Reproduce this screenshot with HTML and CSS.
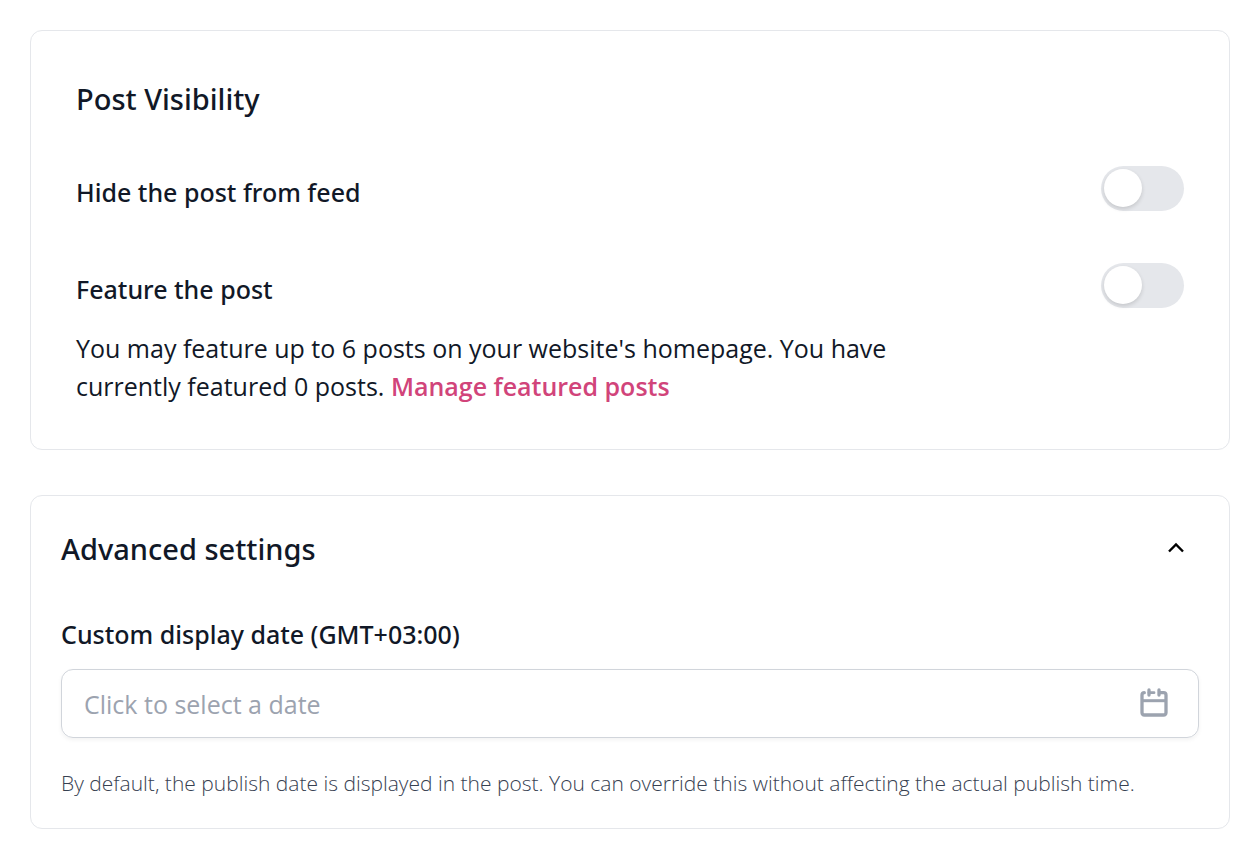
FILE: index.html
```html
<!DOCTYPE html>
<html lang="en">
<head>
    <meta charset="UTF-8">
    <meta name="viewport" content="width=device-width, initial-scale=1.0">
    <title>Post settings</title>
    <link rel="stylesheet" href="styles.css">
</head>
<body>
    <section class="card visibility">
        <h2>Post Visibility</h2>
        <div class="option">
            <label for="hide-post">Hide the post from feed</label>
            <input type="checkbox" class="toggle" id="hide-post">
        </div>
        <div class="option">
            <div class="option-text">
                <label for="feature-post">Feature the post</label>
                <p>You may feature up to 6 posts on your website's homepage. You have currently featured 0 posts. <a href="#">Manage featured posts</a></p>
            </div>
            <input type="checkbox" class="toggle" id="feature-post">
        </div>
    </section>

    <section class="card advanced">
        <h2>
            <button type="button" class="collapse-btn" aria-expanded="true">
                Advanced settings
                <svg width="16" height="14" viewBox="0 0 16 14" fill="none" stroke="#000" stroke-width="2.4">
                    <path d="M1 9.5 L8 2.5 L15 9.5"/>
                </svg>
            </button>
        </h2>
        <label for="display-date">Custom display date (GMT+03:00)</label>
        <div class="date-field">
            <input type="text" id="display-date" placeholder="Click to select a date">
            <svg width="28" height="32" viewBox="0 0 28 32" fill="none" stroke="#9ca3af" stroke-width="3.3" stroke-linecap="round">
                <path d="M4.3 4.7 Q2 4.7 2 7 V24.5 Q2 27 4.5 27 H23.5 Q26 27 26 24.5 V7 Q26 4.7 23.7 4.7 H20"/>
                <path d="M9 4.7 H14" stroke-width="2.8"/>
                <path d="M2 12.7 H26" stroke-linecap="butt" stroke-width="3"/>
                <path d="M9 2 V7 M19 2 V7"/>
            </svg>
        </div>
        <p class="hint">By default, the publish date is displayed in the post. You can override this without affecting the actual publish time.</p>
    </section>
</body>
</html>
```
FILE: styles.css
```css
* {
    box-sizing: border-box;
}

body {
    margin: 0;
    padding: 30px;
    font-family: "Open Sans", "Noto Sans", sans-serif;
    font-size: 25px;
    line-height: 38px;
    color: #111827;
    background-color: #fff;
}

h2, p {
    margin: 0;
}

h2 {
    font-family: "Noto Sans", sans-serif;
    font-size: 29px;
    font-weight: 500;
    line-height: 45px;
}

label {
    display: block;
    font-family: "Noto Sans", sans-serif;
    font-weight: 500;
}

.card {
    border: 1px solid #e5e7eb;
    border-radius: 12px;
}

.visibility {
    padding: 45px 45px 44px;
    margin-bottom: 45px;
}

.option {
    display: flex;
    justify-content: space-between;
    align-items: flex-start;
    margin-top: 52px;
}

h2 + .option {
    margin-top: 45px;
}

.option label {
    padding-top: 7px;
}

.option-text {
    max-width: 830px;
}

.option-text p {
    margin-top: 21px;
}

.option a {
    color: #d1447a;
    font-weight: 600;
    text-decoration: none;
}

/* Toggle switch */
.toggle {
    appearance: none;
    flex: none;
    width: 83px;
    height: 45px;
    margin: 0;
    padding: 3px;
    border-radius: 23px;
    background-color: #e5e7eb;
    cursor: pointer;
}

.toggle::before {
    content: "";
    display: block;
    width: 38px;
    height: 38px;
    border-radius: 50%;
    background-color: #fff;
    box-shadow: 0 2px 4px rgba(0, 0, 0, 0.14);
}

.toggle:checked {
    background-color: #d1447a;
}

.toggle:checked::before {
    margin-left: auto;
}

.advanced {
    padding: 30px;
}

.collapse-btn {
    display: flex;
    justify-content: space-between;
    align-items: center;
    width: 100%;
    margin-bottom: 44px;
    padding: 0 15px 0 0;
    border: none;
    background: none;
    font: inherit;
    color: inherit;
    cursor: pointer;
}

.date-field {
    display: flex;
    align-items: center;
    height: 69px;
    margin-top: 16px;
    padding: 0 30px 0 22px;
    border: 1px solid #d1d5db;
    border-radius: 12px;
    box-shadow: 0 2px 4px rgba(0, 0, 0, 0.05);
}

.date-field input {
    flex: 1;
    min-width: 0;
    padding: 0;
    border: none;
    outline: none;
    background: none;
    font: inherit;
    color: inherit;
}

.date-field input::placeholder {
    color: #9ca3af;
    opacity: 1;
}

.hint {
    margin-top: 30px;
    font-size: 21px;
    font-weight: 300;
    line-height: 30px;
    color: #374151;
}
```
